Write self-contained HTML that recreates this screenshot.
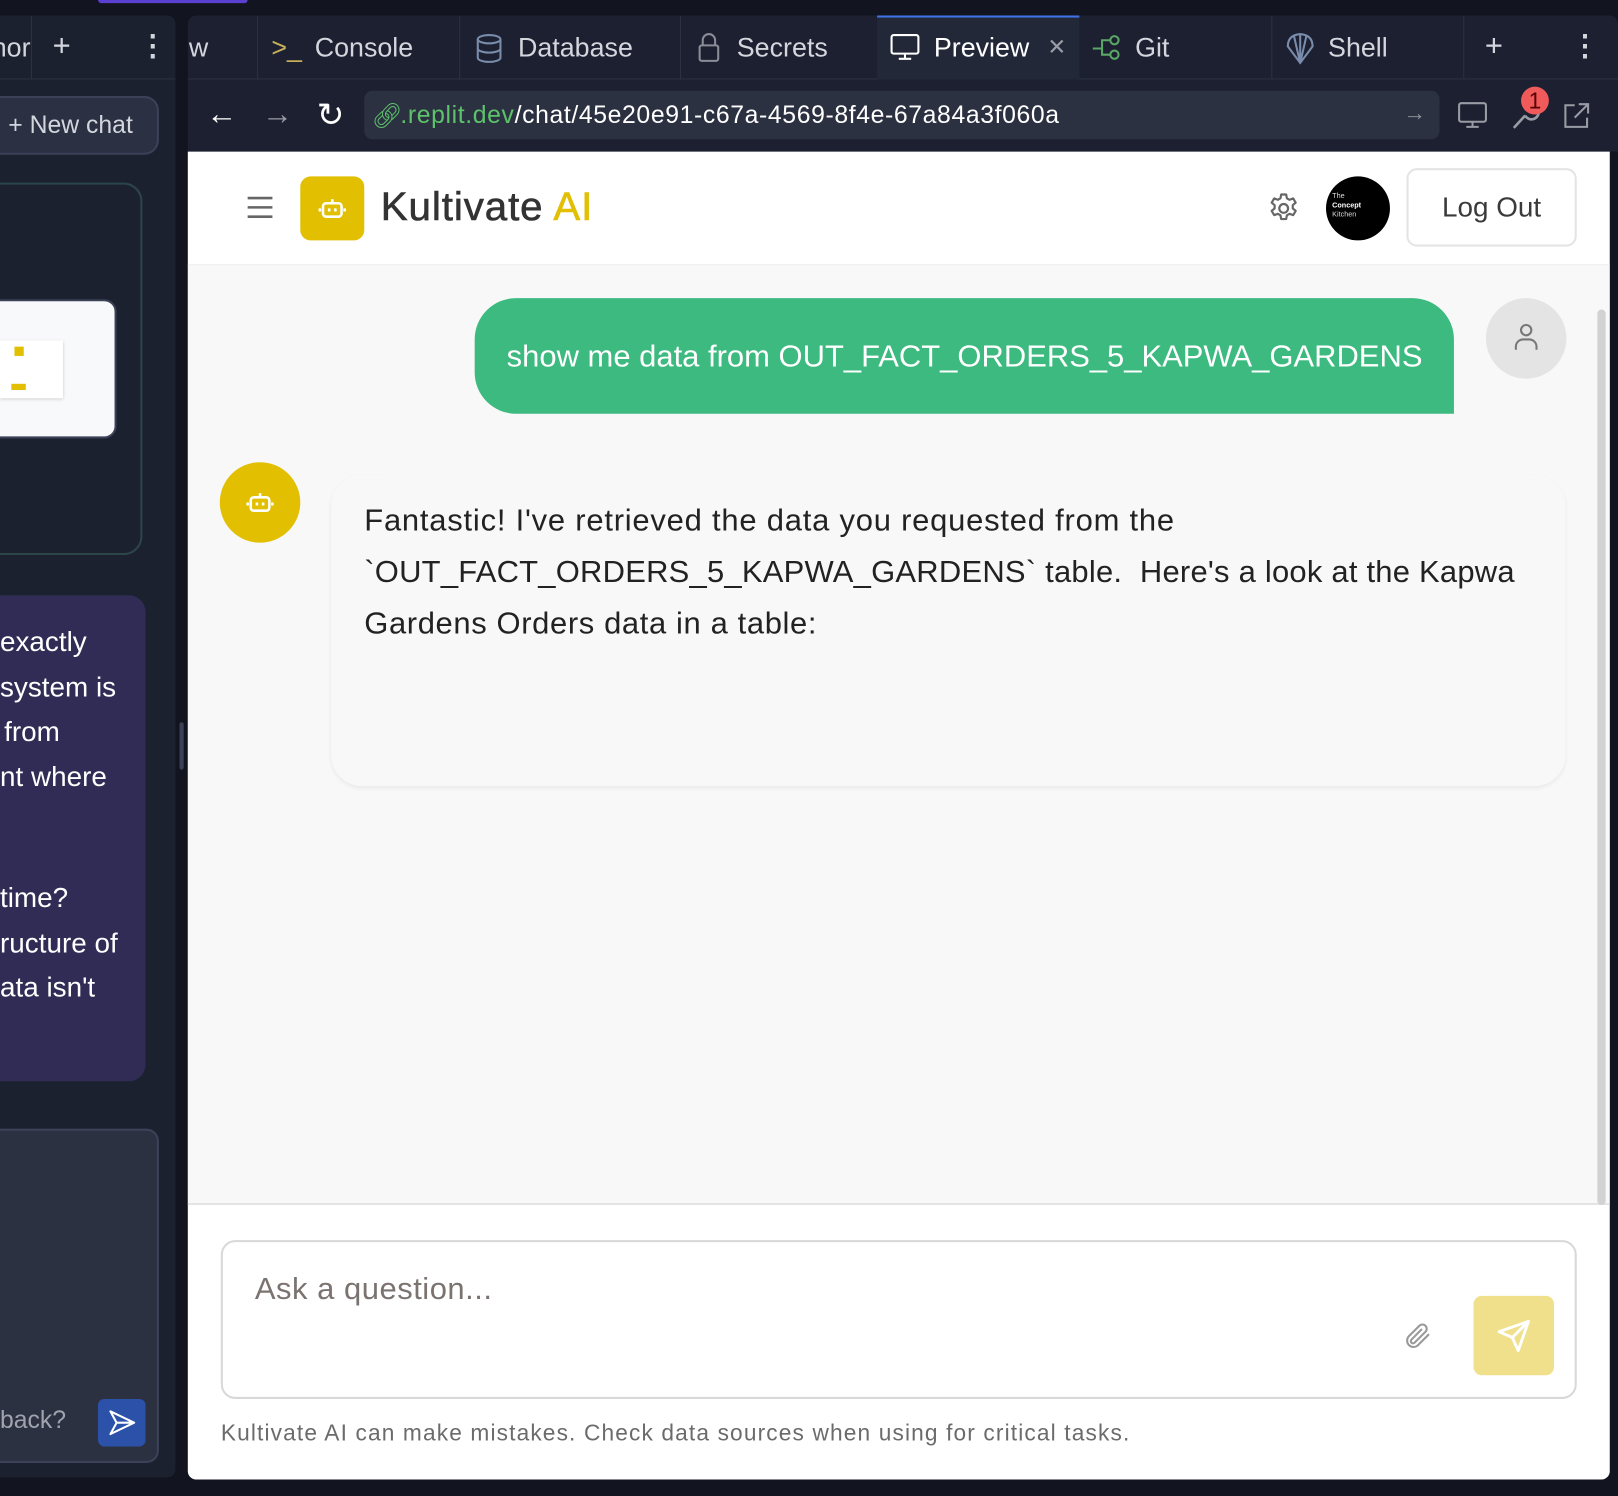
<!DOCTYPE html>
<html><head><meta charset="utf-8"><style>
*{box-sizing:border-box;margin:0;padding:0}
body{width:1618px;height:1496px;overflow:hidden;background:#12141f;font-family:"Liberation Sans",sans-serif}
#w{position:absolute;left:0;top:0;width:1568px;height:1450px;transform:scale(1.0319,1.0317);transform-origin:0 0;background:#12141f}
.a{position:absolute}
.t{color:#d4d6de;font-size:26px;white-space:nowrap}
.dv{position:absolute;top:15px;width:1px;height:62px;background:#2c3142}
.lt{position:absolute;left:0;color:#fff;font-size:27px;white-space:nowrap}
svg{position:absolute}
</style></head><body><div id="w">
<div class="a" style="left:95px;top:0;width:145px;height:3px;background:#5b3fd0;border-radius:0 0 4px 4px"></div>
<!-- left panel -->
<div class="a" style="left:0;top:15px;width:170px;height:1417px;background:#1c2130;border-radius:0 8px 8px 0"></div>
<div class="a" style="left:0;top:76px;width:170px;height:1px;background:#2c3142"></div>
<div class="dv" style="left:30px"></div>
<div class="a t" style="left:-8px;top:31px">nor</div>
<div class="a t" style="left:51px;top:28px;font-size:30px">+</div>
<div class="a t" style="left:134px;top:28px;font-size:28px;font-weight:bold">⋮</div>
<div class="a" style="left:-20px;top:93px;width:174px;height:57px;background:#2b3043;border:2px solid #3b4157;border-radius:14px"></div>
<div class="a t" style="left:8px;top:108px;font-size:24px">+ New chat</div>
<div class="a" style="left:-20px;top:177px;width:158px;height:361px;border:2px solid #2c4548;border-radius:18px"></div>
<div class="a" style="left:-20px;top:290px;width:133px;height:135px;background:#f8f9fa;border:2px solid #3b4157;border-radius:12px"></div>
<div class="a" style="left:0;top:330px;width:61px;height:56px;background:#fff;box-shadow:0 1px 3px #ccc"></div>
<div class="a" style="left:14px;top:336px;width:9px;height:9px;background:#e2bf00"></div>
<div class="a" style="left:11px;top:372px;width:14px;height:6px;background:#e2bf00"></div>
<div class="a" style="left:-20px;top:577px;width:161px;height:471px;background:#302c55;border-radius:16px"></div>
<div class="lt" style="top:607px">exactly</div>
<div class="lt" style="top:651px">system is</div>
<div class="lt" style="top:694px;left:4px">from</div>
<div class="lt" style="top:738px">nt where</div>
<div class="lt" style="top:855px">time?</div>
<div class="lt" style="top:899px">ructure of</div>
<div class="lt" style="top:942px">ata isn't</div>
<div class="a" style="left:-20px;top:1094px;width:174px;height:324px;background:#2c3142;border:2px solid #3b4157;border-radius:12px"></div>
<div class="a" style="left:0;top:1363px;color:#a0a3ad;font-size:24px">back?</div>
<div class="a" style="left:95px;top:1356px;width:46px;height:46px;background:#2b52a8;border-radius:6px"></div>
<svg style="left:103px;top:1364px" width="30" height="30" viewBox="0 0 30 30"><path d="M4 4 L27 15 L4 26 L10 15 Z M10 15 H27" fill="none" stroke="#fff" stroke-width="2" stroke-linejoin="round"/></svg>
<div class="a" style="left:174px;top:700px;width:4px;height:46px;background:#3b4157;border-radius:2px"></div>
<!-- right top -->
<div class="a" style="left:182px;top:15px;width:1386px;height:132px;background:#1c2030;border-radius:8px 8px 0 0"></div>
<div class="a" style="left:182px;top:76px;width:1386px;height:1px;background:#2c3142"></div>
<div class="a t" style="left:183px;top:31px">w</div>
<div class="dv" style="left:249px"></div>
<div class="a t" style="left:263px;top:31px;color:#c7b05a">&gt;_</div>
<div class="a t" style="left:305px;top:31px">Console</div>
<div class="dv" style="left:445px"></div>
<svg style="left:460px;top:32px" width="28" height="30" viewBox="0 0 28 30"><ellipse cx="14" cy="6" rx="11" ry="4" fill="none" stroke="#7a8cab" stroke-width="2"/><path d="M3 6v18c0 2.2 5 4 11 4s11-1.8 11-4V6M3 15c0 2.2 5 4 11 4s11-1.8 11-4" fill="none" stroke="#7a8cab" stroke-width="2"/></svg>
<div class="a t" style="left:502px;top:31px">Database</div>
<div class="dv" style="left:659px"></div>
<svg style="left:676px;top:31px" width="22" height="30" viewBox="0 0 22 30"><rect x="2" y="13" width="18" height="15" rx="2" fill="none" stroke="#8a8d97" stroke-width="2"/><path d="M5 13V8a6 6 0 0 1 12 0v5" fill="none" stroke="#8a8d97" stroke-width="2"/></svg>
<div class="a t" style="left:714px;top:31px">Secrets</div>
<div class="a" style="left:850px;top:15px;width:196px;height:62px;background:#232839;border-top:2px solid #3f74e8"></div>
<svg style="left:862px;top:32px" width="30" height="28" viewBox="0 0 30 28"><rect x="2" y="2" width="26" height="18" rx="2" fill="none" stroke="#fff" stroke-width="2"/><path d="M15 20v5M9 25h12" stroke="#fff" stroke-width="2"/></svg>
<div class="a t" style="left:905px;top:31px;color:#fff">Preview</div>
<div class="a t" style="left:1015px;top:33px;font-size:22px;color:#9a9ca5">✕</div>
<svg style="left:1058px;top:32px" width="32" height="28" viewBox="0 0 32 28"><path d="M1 15h9M10 15V7h8M10 15v6h8" fill="none" stroke="#5aa865" stroke-width="2"/><circle cx="22" cy="7" r="4" fill="none" stroke="#5aa865" stroke-width="2"/><circle cx="22" cy="21" r="4" fill="none" stroke="#5aa865" stroke-width="2"/></svg>
<div class="a t" style="left:1100px;top:31px">Git</div>
<div class="dv" style="left:1232px"></div>
<svg style="left:1245px;top:31px" width="30" height="32" viewBox="0 0 30 32"><path d="M15 30 L3 14 Q3 3 15 2 Q27 3 27 14 Z M15 30 L9 4 M15 30 L15 2 M15 30 L21 4" fill="none" stroke="#7a8cab" stroke-width="2"/></svg>
<div class="a t" style="left:1287px;top:31px">Shell</div>
<div class="dv" style="left:1418px"></div>
<div class="a t" style="left:1439px;top:28px;font-size:30px">+</div>
<div class="a t" style="left:1522px;top:28px;font-size:28px;font-weight:bold">⋮</div>
<div class="a t" style="left:200px;top:94px;font-size:30px;color:#fff">←</div>
<div class="a t" style="left:254px;top:94px;font-size:30px;color:#9a9ca5">→</div>
<div class="a t" style="left:307px;top:92px;font-size:32px;color:#fff">↻</div>
<div class="a" style="left:353px;top:88px;width:1042px;height:47px;background:#2c3142;border-radius:8px"></div>
<div class="a" style="left:360px;top:98px;font-size:24px;color:#5cc36a;white-space:nowrap">🔗︎</div>
<div class="a" style="left:388px;top:98px;font-size:24px;color:#fff;white-space:nowrap;letter-spacing:0.6px"><span style="color:#5cc36a">.replit.dev</span>/chat/45e20e91-c67a-4569-8f4e-67a84a3f060a</div>
<div class="a t" style="left:1360px;top:97px;font-size:22px;color:#8a8d97">→</div>
<svg style="left:1412px;top:98px" width="30" height="28" viewBox="0 0 30 28"><rect x="2" y="2" width="26" height="18" rx="2" fill="none" stroke="#9a9ca5" stroke-width="2"/><path d="M15 20v5M9 25h12" stroke="#9a9ca5" stroke-width="2"/></svg>
<svg style="left:1464px;top:98px" width="30" height="28" viewBox="0 0 30 28"><path d="M3 26 L14 14 M14 14 a7 7 0 1 0 4-10" fill="none" stroke="#9a9ca5" stroke-width="2.5"/></svg>
<div class="a" style="left:1474px;top:84px;width:27px;height:27px;border-radius:50%;background:#f05a5a;color:#5a0000;font-size:22px;text-align:center;line-height:27px">1</div>
<svg style="left:1514px;top:98px" width="28" height="28" viewBox="0 0 28 28"><path d="M12 4H3v21h21v-9M16 3h9v9M25 3L12 16" fill="none" stroke="#9a9ca5" stroke-width="2"/></svg>
<!-- app -->
<div class="a" style="left:182px;top:147px;width:1378px;height:1287px;background:#fff;border-radius:0 0 8px 8px;overflow:hidden">
 <div class="a" style="left:0;top:109px;width:1378px;height:912px;background:#f8f8f8;border-top:1px solid #efefef;border-bottom:2px solid #e4e4e4"></div>
 <svg style="left:57px;top:43px" width="26" height="22" viewBox="0 0 26 22"><path d="M1 2h24M1 11h24M1 20h24" stroke="#666" stroke-width="2.5"/></svg>
 <div class="a" style="left:109px;top:24px;width:62px;height:62px;background:#e2bf00;border-radius:10px"></div>
 <svg style="left:124px;top:39px" width="32" height="32" viewBox="0 0 32 32"><rect x="7" y="11" width="18" height="13" rx="3" fill="none" stroke="#fff" stroke-width="2.5"/><path d="M16 11V7M4 16v3M28 16v3M13 16v3M19 16v3" stroke="#fff" stroke-width="2.5"/></svg>
 <div class="a" style="left:187px;top:32px;font-size:39px;color:#333;letter-spacing:0.9px;white-space:nowrap;-webkit-text-stroke:0.6px #333">Kultivate <span style="color:#e2bf00;-webkit-text-stroke:0.6px #e2bf00">AI</span></div>
 <svg style="left:1045px;top:38px" width="34" height="34" viewBox="0 0 24 24"><path d="M10.3 2.5h3.4l.5 2.6 1.8 1 2.5-.9 1.7 2.9-2 1.7v2.2l2 1.7-1.7 2.9-2.5-.9-1.8 1-.5 2.6h-3.4l-.5-2.6-1.8-1-2.5.9-1.700-2.9 2-1.7v-2.2l-2-1.7 1.7-2.9 2.5.9 1.8-1z" fill="none" stroke="#666" stroke-width="1.5" stroke-linejoin="round"/><circle cx="12" cy="12" r="3" fill="none" stroke="#666" stroke-width="1.5"/></svg>
 <div class="a" style="left:1103px;top:24px;width:62px;height:62px;border-radius:50%;background:#000"></div>
 <div class="a" style="left:1109px;top:39px;font-size:7px;color:#ddd;line-height:9px">The<br><b style="color:#fff">Concept</b><br>Kitchen</div>
 <div class="a" style="left:1181px;top:16px;width:165px;height:76px;border:2px solid #e4e4e4;border-radius:10px;text-align:center;line-height:72px;font-size:27px;color:#3a3a3a">Log Out</div>
 <div class="a" style="left:1366px;top:153px;width:8px;height:868px;background:#d2d2d2;border-radius:4px"></div>
 <div class="a" style="left:278px;top:142px;width:949px;height:112px;background:#3dba7f;border-radius:40px 40px 0 40px"></div>
 <div class="a" style="left:309px;top:182px;font-size:30px;color:#fff;white-space:nowrap">show me data from OUT_FACT_ORDERS_5_KAPWA_GARDENS</div>
 <div class="a" style="left:1258px;top:142px;width:78px;height:78px;border-radius:50%;background:#e4e4e4"></div>
 <svg style="left:1283px;top:165px" width="28" height="30" viewBox="0 0 28 30"><circle cx="14" cy="8" r="5" fill="none" stroke="#777" stroke-width="2"/><path d="M4 27v-3a7 7 0 0 1 7-7h6a7 7 0 0 1 7 7v3" fill="none" stroke="#777" stroke-width="2"/></svg>
 <div class="a" style="left:31px;top:301px;width:78px;height:78px;border-radius:50%;background:#e2bf00"></div>
 <svg style="left:54px;top:324px" width="32" height="32" viewBox="0 0 32 32"><rect x="7" y="11" width="18" height="13" rx="3" fill="none" stroke="#fff" stroke-width="2.5"/><path d="M16 11V7M4 16v3M28 16v3M13 16v3M19 16v3" stroke="#fff" stroke-width="2.5"/></svg>
 <div class="a" style="left:139px;top:313px;width:1196px;height:302px;background:#f8f8f8;border-radius:30px;box-shadow:0 2px 4px rgba(0,0,0,0.06)"></div>
 <div class="a" style="left:171px;top:333px;font-size:30px;line-height:50px;color:#222;width:1180px;white-space:nowrap"><div style="letter-spacing:0.75px">Fantastic! I've retrieved the data you requested from the</div><div style="letter-spacing:0.22px">`OUT_FACT_ORDERS_5_KAPWA_GARDENS` table.&nbsp; Here's a look at the Kapwa</div><div style="letter-spacing:0.6px">Gardens Orders data in a table:</div></div>
 <div class="a" style="left:32px;top:1055px;width:1314px;height:154px;border:2px solid #d8d8d8;border-radius:14px"></div>
 <div class="a" style="left:65px;top:1086px;font-size:30px;letter-spacing:0.5px;color:#7a7370">Ask a question...</div>
 <svg style="left:1176px;top:1133px" width="30" height="30" viewBox="0 0 24 24"><path d="M21 11l-8.5 8.5a5 5 0 0 1-7-7L14 4a3.3 3.3 0 0 1 4.7 4.7l-8.5 8.5a1.7 1.7 0 0 1-2.4-2.4L15.5 7" fill="none" stroke="#999" stroke-width="1.6" stroke-linecap="round"/></svg>
 <div class="a" style="left:1246px;top:1109px;width:78px;height:77px;background:#f0e08c;border-radius:8px"></div>
 <svg style="left:1268px;top:1131px" width="34" height="34" viewBox="0 0 24 24"><path d="M22 2L11 13M22 2l-7 20-4-9-9-4z" fill="none" stroke="#fff" stroke-width="2" stroke-linejoin="round"/></svg>
 <div class="a" style="left:32px;top:1229px;font-size:22px;letter-spacing:1.1px;color:#6b6b6b;white-space:nowrap">Kultivate AI can make mistakes. Check data sources when using for critical tasks.</div>
</div>
</div></body></html>
